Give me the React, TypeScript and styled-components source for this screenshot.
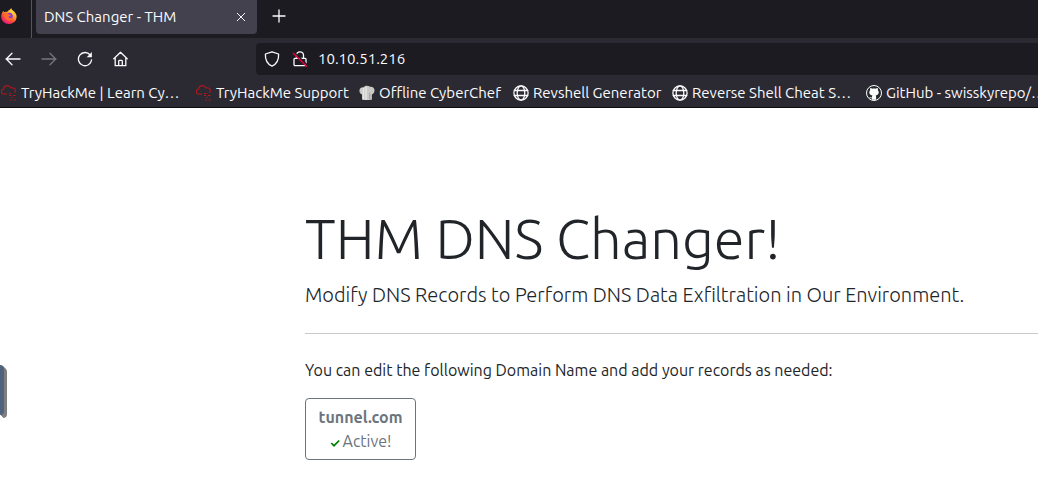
import React from "react";
import styled, { createGlobalStyle } from "styled-components";

const GlobalStyle = createGlobalStyle`
  *, *::before, *::after { box-sizing: border-box; }
  body {
    margin: 0;
    background: #fff;
    color: #212529;
    font-family: Ubuntu, "Noto Sans", "Open Sans", sans-serif;
    font-size: 16px;
    line-height: 24px;
    overflow-x: hidden;
  }
  button, input { font: inherit; color: inherit; }
`;

const Chrome = styled.header`
  background: #2b2a33;
  color: #fbfbfe;
  border-bottom: 1px solid #0c0c0d;
  font-size: 15px;
  line-height: 20px;
`;

const TabStrip = styled.div`
  display: flex;
  height: 38px;
  background: #1c1b22;
`;

const AppMark = styled.div`
  width: 32px;
  padding: 8px 0 0 1px;
  border-right: 1px solid #56555e;
  svg { display: block; }
`;

const Tab = styled.div`
  display: flex;
  align-items: center;
  justify-content: space-between;
  width: 221px;
  height: 34px;
  margin-left: 4px;
  padding: 0 8px;
  background: #42414d;
  border-radius: 0 0 4px 4px;
`;

const IconButton = styled.button`
  display: flex;
  align-items: center;
  justify-content: center;
  width: 16px;
  height: 16px;
  padding: 0;
  border: 0;
  background: none;
  &:disabled { color: #76757c; }
`;

const NewTab = styled(IconButton)`
  margin: 8px 0 0 14px;
`;

const NavBar = styled.div`
  display: flex;
  align-items: center;
  height: 41px;
`;

const NavButtons = styled.div`
  display: flex;
  gap: 20px;
  width: 256px;
  padding-left: 5px;
`;

const AddressBar = styled.div`
  display: flex;
  flex: 1;
  align-items: center;
  gap: 12px;
  height: 32px;
  padding-left: 8px;
  background: #1c1b22;
  border-radius: 4px 0 0 4px;
`;

const AddressInput = styled.input`
  flex: 1;
  min-width: 0;
  margin-left: -2px;
  padding: 0;
  border: 0;
  outline: 0;
  background: none;
`;

const Bookmarks = styled.nav`
  display: flex;
  height: 28px;
  overflow: hidden;
  padding-left: 1px;
`;

const Bookmark = styled.a<{ $width: number }>`
  display: flex;
  flex: none;
  align-items: center;
  gap: 4px;
  width: ${(p) => p.$width}px;
  color: inherit;
  text-decoration: none;
  white-space: nowrap;
  svg { flex: none; }
`;

const Page = styled.main`
  position: relative;
  padding: 97px 0 16px 305px;
`;

const Title = styled.h1`
  margin: 0 0 8px;
  font-size: 56px;
  font-weight: 300;
  line-height: 67px;
  white-space: nowrap;
`;

const Lead = styled.p`
  margin: 0;
  font-size: 20px;
  font-weight: 300;
  line-height: 30px;
  white-space: nowrap;
`;

const Rule = styled.hr`
  margin: 23px 0 24px;
  border: 0;
  border-top: 1px solid #c8c9ca;
`;

const Intro = styled.p`
  margin: 0 0 16px;
`;

const DomainButton = styled.button`
  min-width: 111px;
  padding: 6px 12px;
  border: 1px solid #6c757d;
  border-radius: 4px;
  background: #fff;
  color: #6c757d;
  strong { display: block; }
`;

const Status = styled.span`
  display: flex;
  align-items: center;
  justify-content: center;
  gap: 3px;
  svg { margin-top: 4px; }
`;

const SideHandle = styled.button`
  position: absolute;
  left: 0;
  top: 257px;
  width: 4px;
  height: 50px;
  padding: 0;
  border: 0;
  border-radius: 0 4px 4px 0;
  background: #50627e;
  box-shadow: 3px 3px 0 #7e7e7e, 1px 1px 0 #7e7e7e, 2px 2px 0 #7e7e7e;
`;

const Line = ({ size = 16, children }: { size?: number; children: React.ReactNode }) => (
  <svg width={size} height={size} viewBox="0 0 16 16" fill="none" stroke="currentColor" strokeWidth="1.3" strokeLinecap="round" strokeLinejoin="round" aria-hidden="true">
    {children}
  </svg>
);

const Firefox = () => (
  <svg width="16" height="16" viewBox="0 0 16 16" aria-hidden="true">
    <defs>
      <linearGradient id="flame" x1="0.85" y1="0.05" x2="0.25" y2="1">
        <stop offset="0" stopColor="#fff44f" />
        <stop offset="0.35" stopColor="#ffa72b" />
        <stop offset="0.65" stopColor="#ff4a3a" />
        <stop offset="1" stopColor="#e6138a" />
      </linearGradient>
    </defs>
    <path d="M10.2 0c.3 1.800 1.700 2.300 2.900 3.600 1.700 1.600 2.700 3.600 2.500 5.600A7.700 7.100 0 0 1 8 16 7.700 7.200 0 0 1 .2 9c-.1-2.400.8-4.400 2.200-6.200l.6 1.500c1-.7 2-.8 3-.3C7.500 1.800 9.200 2 10.200 0z" fill="url(#flame)" />
    <circle cx="8.200" cy="8.400" r="3.600" fill="#7f3fdc" />
    <path d="M3 5.500c2-1.500 4-.7 4.800.8L10 7c-.4 1.100-1.800 1-2.400 1.600-.5 1 .7 2 2.400 1.500 1-.4 1.500-1 1.700-1.800.4 3-1.700 4.700-4 4.500C4.600 12.600 2.600 9 3 5.500z" fill="#ff6a2c" />
    <path d="M8 3.800c2.500-.2 4 1.500 4.300 4.200.6-2.300 0-4.400-1.500-5.600z" fill="#ffd03a" />
  </svg>
);

const Back = () => <Line><path d="M1 8h14M7 2.300 1.300 8 7 13.700" /></Line>;
const Forward = () => <Line><path d="M1 8h14M9 2.300 14.700 8 9 13.700" /></Line>;
const Reload = () => (
  <Line>
    <path d="M13.200 4A6.600 6.600 0 1 0 14.600 8.800" />
    <path d="M14.900 1v5.200H9.700z" fill="currentColor" stroke="none" />
  </Line>
);
const Home = () => (
  <Line>
    <path d="M.8 7.800 7.500 1.200 14.200 7.800M2.200 7v7.700h10.600V7M5.700 14.500V10.200c0-.5.300-.8.800-.8h2c.5 0 .8.300.8.800v4.300" />
  </Line>
);
const Shield = () => (
  <Line>
    <path d="M8 .8 14.600 3c.3 5.500-1.200 9.700-6.600 12.200C2.600 12.700 1.100 8.500 1.400 3z" />
  </Line>
);
const InsecureLock = () => (
  <Line>
    <path d="M4.500 7V4.300a3.500 3.500 0 0 1 7 0V7M3 7.300h10c.6 0 1 .4 1 1v5.200c0 .7-.4 1.200-1.100 1.200H3.100c-.7 0-1.100-.5-1.100-1.200V8.300c0-.6.4-1 1-1z" />
    <path d="m2.600 1.800 12.400 12" stroke="#1c1b22" strokeWidth="1.500" />
    <path d="m1.300 2.300 13.200 13" stroke="#e2003e" strokeWidth="1.500" />
  </Line>
);
const Globe = () => (
  <Line>
    <circle cx="8" cy="8" r="7.100" />
    <ellipse cx="8" cy="8" rx="3.800" ry="7.100" />
    <path d="M1.300 5.500h13.400M1.300 10.500h13.400" />
  </Line>
);
const Cloud = () => (
  <svg width="16" height="16" viewBox="0 0 16 16" fill="none" stroke="#b3171d" strokeWidth="1.100" aria-hidden="true">
    <path d="M6 9H2.800A2.300 2.300 0 0 1 2.600 4.300C2.900 1.600 4.600.6 6.400.6c1.800 0 2.900.9 3.400 2.300 2.700-.6 4.600.8 4.600 2.800 0 1-.3 1.500-.9 2" />
    <path d="M8 8.500h2.500M8 10.500h2.200M12 10.500h2.500" />
    <path d="M10.200 12.500H12M9 15h2M12.500 15H15" strokeWidth=".8" />
  </svg>
);
const ChefHat = () => (
  <svg width="16" height="16" viewBox="0 0 16 16" aria-hidden="true">
    <path d="M3 14.500V9.500C.8 8.500.1 6.800.5 5 .9 3 2.600 2 4.300 2.400 5.300.7 9 .1 11 1.800c2.400-.5 4.400.8 4.500 3.200.1 2-.8 3.600-2.500 4.500v5c-2.500.8-7.500.8-10 0z" fill="#c9c9c7" />
    <path d="M4.500 3v11.500M7 2v12.800" stroke="#e6e6e4" strokeWidth="1.500" />
    <path d="M10.500 7.500v7M12 9v5.500" stroke="#aaa" />
  </svg>
);
const GitHub = () => (
  <svg width="16" height="16" viewBox="0 0 16 16" aria-hidden="true">
    <circle cx="8" cy="8" r="7.500" fill="#24292e" stroke="#fff" strokeWidth="1" />
    <path d="M4.300 3c.9 0 1.500.4 2.100.8 1-.3 2.200-.3 3.200 0 .6-.4 1.200-.8 2.100-.8.3.8.300 1.400.100 2 1.900 2.300.8 5.100-2.200 5.500.4.500.5 1 .5 1.700v2.600H5.900v-1.600c-1.600.4-2-.5-2.700-1.300 1.200-.2 1.300.9 2.700.5 0-.8.200-1.400.6-1.900-3-.4-4.200-3.200-2.300-5.500-.2-.6-.2-1.200.1-2z" fill="#fff" />
  </svg>
);

const bookmarks = [
  { label: "TryHackMe | Learn Cy…", Icon: Cloud, width: 195 },
  { label: "TryHackMe Support", Icon: Cloud, width: 163 },
  { label: "Offline CyberChef", Icon: ChefHat, width: 154 },
  { label: "Revshell Generator", Icon: Globe, width: 159 },
  { label: "Reverse Shell Cheat S…", Icon: Globe, width: 194 },
  { label: "GitHub - swisskyrepo/…", Icon: GitHub, width: 195 },
];

export default function App() {
  return (
    <>
      <GlobalStyle />
      <Chrome>
        <TabStrip>
          <AppMark><Firefox /></AppMark>
          <Tab>
            <span>DNS Changer - THM</span>
            <IconButton aria-label="Close tab">
              <Line size={12}><path d="M3 3l10 10M13 3 3 13" /></Line>
            </IconButton>
          </Tab>
          <NewTab aria-label="New tab"><Line><path d="M8 2v12M2 8h12" /></Line></NewTab>
        </TabStrip>
        <NavBar>
          <NavButtons>
            <IconButton aria-label="Back"><Back /></IconButton>
            <IconButton aria-label="Forward" disabled><Forward /></IconButton>
            <IconButton aria-label="Reload"><Reload /></IconButton>
            <IconButton aria-label="Home"><Home /></IconButton>
          </NavButtons>
          <AddressBar>
            <IconButton aria-label="Tracking protection"><Shield /></IconButton>
            <IconButton aria-label="Connection not secure"><InsecureLock /></IconButton>
            <AddressInput aria-label="Address" defaultValue="10.10.51.216" />
          </AddressBar>
        </NavBar>
        <Bookmarks aria-label="Bookmarks">
          {bookmarks.map(({ label, Icon, width }) => (
            <Bookmark key={label} href="#" $width={width}>
              <Icon />
              {label}
            </Bookmark>
          ))}
        </Bookmarks>
      </Chrome>
      <Page>
        <SideHandle aria-label="Open side panel" />
        <Title>THM DNS Changer!</Title>
        <Lead>Modify DNS Records to Perform DNS Data Exfiltration in Our Environment.</Lead>
        <Rule />
        <Intro>You can edit the following Domain Name and add your records as needed:</Intro>
        <DomainButton>
          <strong>tunnel.com</strong>
          <Status>
            <svg width="10" height="8" viewBox="0 0 10 8" fill="none" stroke="#008000" strokeWidth="1.700" aria-hidden="true">
              <path d="m1.300 4 2.700 2.700L9.200 1.500" />
            </svg>
            Active!
          </Status>
        </DomainButton>
      </Page>
    </>
  );
}
